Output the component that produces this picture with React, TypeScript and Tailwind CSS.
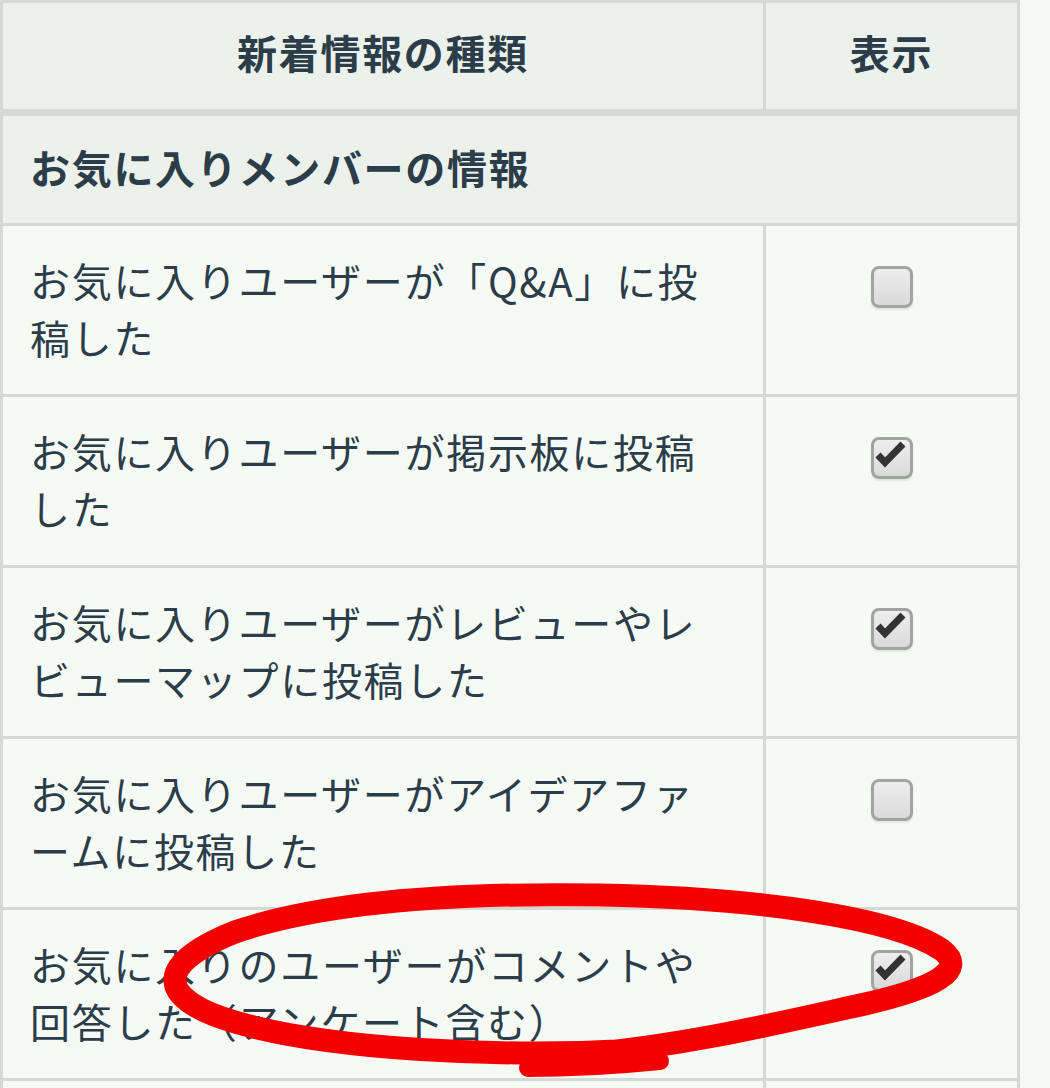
import React from "react";

const FONT = { fontFamily: '"Noto Sans CJK JP", "Noto Sans", sans-serif' };

function Checkbox({ checked }: { checked: boolean }) {
  return (
    <div className="w-[42px] h-[42px] rounded-[8px] border-[3px] border-[#a2a4a2] bg-gradient-to-b from-[#eeeeee] to-[#dadada] shadow-[0_2px_2px_rgba(0,0,0,0.08)] flex items-center justify-center">
      {checked && (
        <svg width="36" height="36" viewBox="0 0 36 36">
          <polyline
            points="4,15 11,22.5 29,4"
            fill="none"
            stroke="#333333"
            strokeWidth="7"
            strokeLinejoin="miter"
            strokeLinecap="butt"
          />
        </svg>
      )}
    </div>
  );
}

function Row({ lines, checked }: { lines: string[]; checked: boolean | null }) {
  return (
    <div className="flex gap-[3px] h-[168px]">
      <div className="w-[760px] bg-[#f6faf5] px-[27px] pt-[26px] text-[40px] leading-[57px] tracking-[1.7px] text-[#2c3d4a]">
        {lines.map((l, i) => (
          <div key={i} className="whitespace-nowrap">
            {l}
          </div>
        ))}
      </div>
      <div className="flex-1 bg-[#f6faf5] flex justify-center pt-[40px]">
        {checked !== null && <Checkbox checked={checked} />}
      </div>
    </div>
  );
}

export default function App() {
  const rows: { lines: string[]; checked: boolean | null }[] = [
    { lines: ["お気に入りユーザーが「Q&A」に投", "稿した"], checked: false },
    { lines: ["お気に入りユーザーが掲示板に投稿", "した"], checked: true },
    { lines: ["お気に入りユーザーがレビューやレ", "ビューマップに投稿した"], checked: true },
    { lines: ["お気に入りユーザーがアイデアファ", "ームに投稿した"], checked: false },
    { lines: ["お気に入りのユーザーがコメントや", "回答した（アンケート含む）"], checked: true },
    { lines: [], checked: null },
  ];
  return (
    <div className="relative w-[1050px] h-[1088px] overflow-hidden bg-[#f6faf5]" style={FONT}>
      <div className="w-[1020px] bg-[#d5d9d4] p-[3px] flex flex-col gap-[3px]">
        <div className="flex gap-[3px] h-[106px] mb-[4px]">
          <div className="w-[760px] bg-[#edf1ec] flex items-center justify-center pb-[8px] text-[40px] font-bold tracking-[1.7px] text-[#2c3d4a]">
            新着情報の種類
          </div>
          <div className="flex-1 bg-[#edf1ec] flex items-center justify-center pb-[8px] text-[40px] font-bold tracking-[1.7px] text-[#2c3d4a]">
            表示
          </div>
        </div>
        <div className="h-[107px] bg-[#edf1ec] flex items-center pl-[27px] pb-[6px] text-[40px] font-bold tracking-[1.7px] text-[#2c3d4a]">
          お気に入りメンバーの情報
        </div>
        {rows.map((r, i) => (
          <Row key={i} lines={r.lines} checked={r.checked} />
        ))}
      </div>
      <svg
        className="absolute left-0 top-0 pointer-events-none"
        width="1050"
        height="1088"
        viewBox="0 0 1050 1088"
      >
        <g fill="none" stroke="#f40000" strokeWidth="23" strokeLinecap="round" strokeLinejoin="round">
          <path d="M640 1050 C 500 1058, 330 1050, 235 1022 C 160 1000, 150 966, 235 932 C 335 898, 480 893, 600 895 C 760 898, 895 918, 942 950 C 968 970, 935 988, 865 1004 C 765 1026, 690 1044, 590 1054" />
          <path d="M528 1068 C 580 1068, 630 1064, 660 1061" strokeWidth="18" />
        </g>
      </svg>
    </div>
  );
}
